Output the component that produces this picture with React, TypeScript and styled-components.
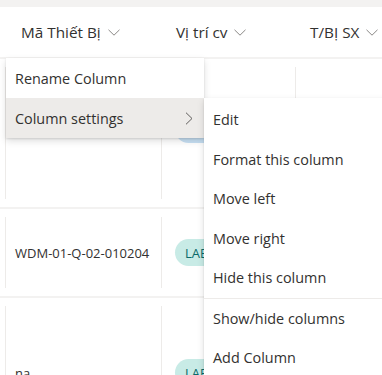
import React from "react";
import styled, { createGlobalStyle } from "styled-components";

const Global = createGlobalStyle`
  html, body { margin: 0; padding: 0; background: #ffffff; }
  body { font-family: "Segoe UI", "Open Sans", "Noto Sans", sans-serif; color: #323130; }
  * { box-sizing: border-box; }
`;

const Page = styled.div`
  position: relative;
  width: 382px;
  height: 375px;
  overflow: hidden;
  background: #ffffff;
`;

const TopBand = styled.div`
  height: 7px;
  background: #f3f2f1;
`;

const HeaderRow = styled.div`
  display: grid;
  grid-template-columns: 156px 134px 1fr;
  height: 52px;
  padding-left: 5px;
  border-bottom: 2px solid #f3f2f1;
`;

const HeaderCell = styled.div<{ $pad: number }>`
  display: flex;
  align-items: center;
  gap: 7px;
  padding-left: ${(p) => p.$pad}px;
  font-size: 15.3px;
  color: #323130;
  white-space: nowrap;
`;

const Row = styled.div<{ $h: number }>`
  display: grid;
  grid-template-columns: 156px 134px 1fr;
  height: ${(p) => p.$h}px;
  padding: 8px 0 8px 5px;
  border-bottom: 2px solid #f3f2f1;
`;

const Cell = styled.div<{ $pad: number; $shift?: number }>`
  display: flex;
  align-items: center;
  border-left: 1px solid #edebe9;
  padding-left: ${(p) => p.$pad}px;
  padding-bottom: ${(p) => p.$shift ?? 0}px;
  font-size: 13px;
  color: #323130;
  white-space: nowrap;
`;

const Pill = styled.span<{ $tone: "teal" | "blue" }>`
  display: inline-flex;
  align-items: center;
  height: 27px;
  padding: 0 10px;
  border-radius: 14px;
  font-size: 13px;
  background: ${(p) => (p.$tone === "teal" ? "#c8ebe6" : "#c7e0f4")};
  color: ${(p) => (p.$tone === "teal" ? "#0b6a6a" : "#004578")};
`;

const Menu = styled.div<{ $left: number; $top: number; $width: number; $padTop?: number }>`
  position: absolute;
  left: ${(p) => p.$left}px;
  top: ${(p) => p.$top}px;
  width: ${(p) => p.$width}px;
  padding-top: ${(p) => p.$padTop ?? 0}px;
  background: #ffffff;
  box-shadow: 0 3.2px 7.2px 0 rgba(0, 0, 0, 0.132), 0 0.6px 1.8px 0 rgba(0, 0, 0, 0.108);
`;

const MenuItem = styled.div<{ $active?: boolean; $h: number }>`
  display: flex;
  align-items: center;
  justify-content: space-between;
  height: ${(p) => p.$h}px;
  padding: 0 11px 0 9px;
  font-size: 14.4px;
  color: #323130;
  white-space: nowrap;
  background: ${(p) => (p.$active ? "#edebe9" : "transparent")};
`;

const Divider = styled.div`
  height: 1px;
  background: #edebe9;
`;

const DownChevron = () => (
  <svg width="12" height="7" viewBox="0 0 12 7" fill="none">
    <path d="M0.5 0.8 L6 6.2 L11.5 0.8" stroke="#8a8886" strokeWidth="1" />
  </svg>
);

const RightChevron = () => (
  <svg width="8" height="13" viewBox="0 0 8 13" fill="none">
    <path d="M1 0.7 L7 6.5 L1 12.3" stroke="#605e5c" strokeWidth="1" />
  </svg>
);

const subItems = ["Edit", "Format this column", "Move left", "Move right", "Hide this column"];

export default function App() {
  return (
    <Page>
      <Global />
      <TopBand />
      <HeaderRow>
        <HeaderCell $pad={16}>
          Mã Thiết Bị <DownChevron />
        </HeaderCell>
        <HeaderCell $pad={15}>
          Vị trí cv <DownChevron />
        </HeaderCell>
        <HeaderCell $pad={15}>
          T/BỊ SX <DownChevron />
        </HeaderCell>
      </HeaderRow>
      <Row $h={150}>
        <Cell $pad={9} />
        <Cell $pad={13} $shift={8}>
          <Pill $tone="blue">LAB QC</Pill>
        </Cell>
        <Cell $pad={13} />
      </Row>
      <Row $h={89}>
        <Cell $pad={9}>WDM-01-Q-02-010204</Cell>
        <Cell $pad={13}>
          <Pill $tone="teal">LAB QC</Pill>
        </Cell>
        <Cell $pad={13} />
      </Row>
      <Row $h={151}>
        <Cell $pad={9}>na</Cell>
        <Cell $pad={13}>
          <Pill $tone="teal">LAB QC</Pill>
        </Cell>
        <Cell $pad={13} />
      </Row>

      <Menu $left={6} $top={58} $width={198}>
        <MenuItem $h={40}>Rename Column</MenuItem>
        <MenuItem $h={40} $active>
          Column settings <RightChevron />
        </MenuItem>
      </Menu>

      <Menu $left={204} $top={98} $width={200} $padTop={2}>
        {subItems.map((t) => (
          <MenuItem key={t} $h={39.5}>
            {t}
          </MenuItem>
        ))}
        <Divider />
        <MenuItem $h={39.5}>Show/hide columns</MenuItem>
        <MenuItem $h={39.5}>Add Column</MenuItem>
      </Menu>
    </Page>
  );
}
